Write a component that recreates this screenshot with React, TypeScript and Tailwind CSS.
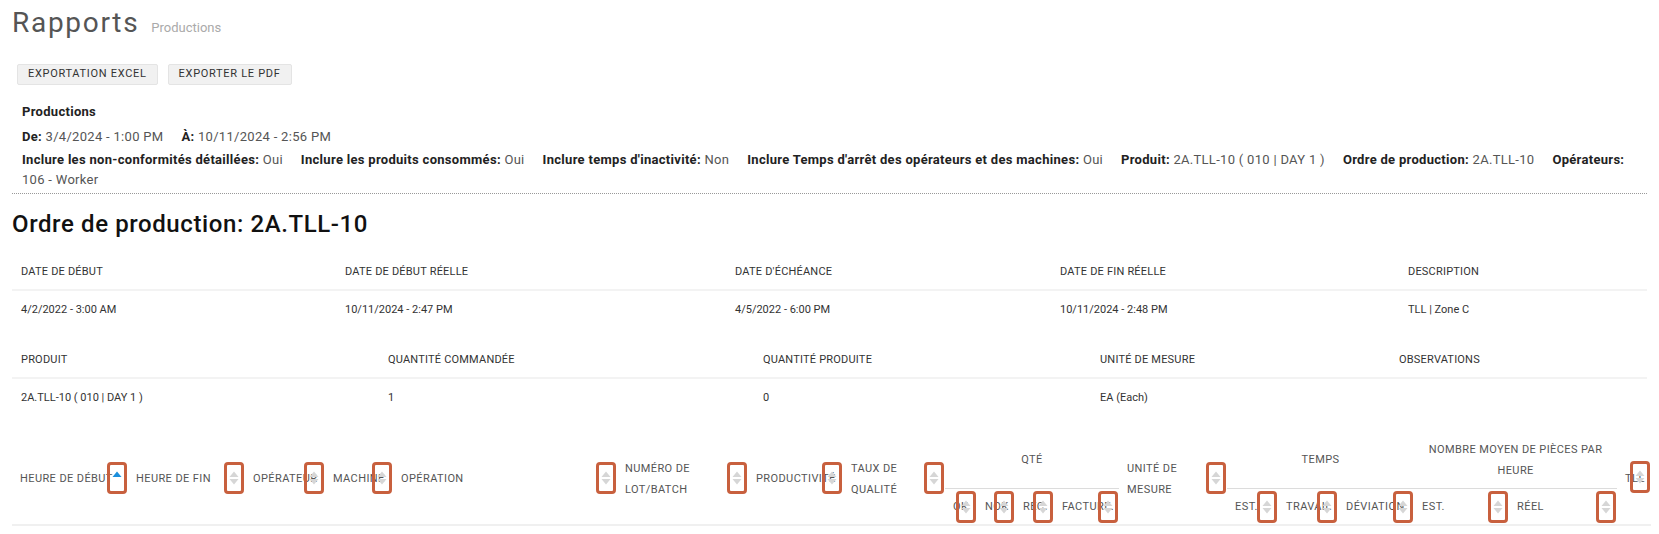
import React from 'react';

type Pos = 'main' | 'sub' | 'tll';

const boxPos: Record<Pos, string> = {
  main: 'top-[24px]',
  sub: 'top-[2px]',
  tll: 'top-[23px]',
};

// sort arrows (datatables style) with the orange highlight frame around them
const SortIcon: React.FC<{ pos: Pos; active?: boolean }> = ({ pos, active }) => (
  <span
    className={`absolute right-[1px] ${boxPos[pos]} w-[20px] h-[32px] rounded-[4px] border-[3px] border-[#c8603e] flex items-center justify-center`}
  >
    <svg width="10" height="14" viewBox="0 0 10 14">
      <polygon points="0.5,6 5,0.5 9.5,6" fill={active ? '#1b8fdc' : '#d6d6d6'} />
      {!active && <polygon points="0.5,8 9.5,8 5,13.5" fill="#d6d6d6" />}
    </svg>
  </span>
);

const filters: [string, string][] = [
  ['Inclure les non-conformités détaillées:', 'Oui'],
  ['Inclure les produits consommés:', 'Oui'],
  ["Inclure temps d'inactivité:", 'Non'],
  ["Inclure Temps d'arrêt des opérateurs et des machines:", 'Oui'],
  ['Produit:', '2A.TLL-10 ( 010 | DAY 1 )'],
  ['Ordre de production:', '2A.TLL-10'],
  ['Opérateurs:', '106 - Worker'],
];

const detailTop = [
  ['Date de début', '4/2/2022 - 3:00 AM'],
  ['Date de début réelle', '10/11/2024 - 2:47 PM'],
  ["Date d'échéance", '4/5/2022 - 6:00 PM'],
  ['Date de fin réelle', '10/11/2024 - 2:48 PM'],
  ['Description', 'TLL | Zone C'],
];

const detailBottom = [
  ['Produit', '2A.TLL-10 ( 010 | DAY 1 )'],
  ['Quantité commandée', '1'],
  ['Quantité produite', '0'],
  ['Unité de mesure', 'EA (Each)'],
  ['Observations', ''],
];

const colWidths = [116, 117, 80, 68, 224, 131, 95, 102, 32, 38, 39, 65, 108, 51, 60, 76, 95, 108, 34];

const thMain = 'relative align-middle text-left font-normal pl-[8px] pr-[18px] pb-[5px] border-b-2 border-[#f0f0f0]';
const thSub = 'relative align-middle text-left font-normal pl-[8px] whitespace-nowrap border-b-2 border-[#f0f0f0]';
const thGroup = 'align-middle text-center font-normal px-[8px] pb-[6px] border-b border-[#dcdcdc]';

export default function App() {
  return (
    <div className="min-h-screen bg-white px-[12px] font-[Roboto,sans-serif] text-[#333]">
      <div className="flex items-baseline gap-[12px] pt-[7px]">
        <h1 className="text-[28px] leading-[32px] tracking-[1.7px] text-[#555] font-normal">Rapports</h1>
        <span className="text-[13px] text-[#aaa]">Productions</span>
      </div>

      <div className="mt-[25px] ml-[5px] flex gap-[10px]">
        <button className="h-[21px] px-[10px] bg-[#f1f1f1] border border-[#e4e4e4] rounded-[2px] text-[11px] tracking-[0.7px] text-[#333]">
          EXPORTATION EXCEL
        </button>
        <button className="h-[21px] px-[10px] bg-[#f1f1f1] border border-[#e4e4e4] rounded-[2px] text-[11px] tracking-[0.7px] text-[#333]">
          EXPORTER LE PDF
        </button>
      </div>

      <div className="mt-[17px] pl-[10px] pr-[8px] pb-[3px] border-b border-dotted border-[#999] text-[13px] tracking-[0.3px] text-[#222]">
        <div className="font-bold leading-[20px]">Productions</div>
        <div className="mt-[5px] leading-[20px]">
          <span className="mr-[18px]">
            <b>De:</b> <span className="text-[#555]">3/4/2024 - 1:00 PM</span>
          </span>
          <span>
            <b>À:</b> <span className="text-[#555]">10/11/2024 - 2:56 PM</span>
          </span>
        </div>
        <div className="mt-[3px] leading-[20px]">
          {filters.map(([label, value]) => (
            <span key={label} className="mr-[18px]">
              <b className="whitespace-nowrap">{label}</b> <span className="text-[#555] whitespace-nowrap">{value}</span>
            </span>
          ))}
        </div>
      </div>

      <h2 className="mt-[16px] text-[24px] leading-[28px] font-medium tracking-[0.6px] text-[#111]">
        Ordre de production: 2A.TLL-10
      </h2>

      <div className="mt-[17px] grid grid-cols-[324px_390px_325px_348px_1fr] text-[11px] text-[#333]">
        {detailTop.map(([h]) => (
          <div key={h} className="h-[36px] flex items-center pl-[9px] uppercase tracking-[0.2px] border-b-2 border-[#f3f3f3]">
            {h}
          </div>
        ))}
        {detailTop.map(([h, v]) => (
          <div key={h + 'v'} className="h-[38px] flex items-center pl-[9px]">
            {v}
          </div>
        ))}
      </div>

      <div className="mt-[14px] grid grid-cols-[367px_375px_337px_299px_1fr] text-[11px] text-[#333]">
        {detailBottom.map(([h]) => (
          <div key={h} className="h-[36px] flex items-center pl-[9px] uppercase tracking-[0.2px] border-b-2 border-[#f3f3f3]">
            {h}
          </div>
        ))}
        {detailBottom.map(([h, v]) => (
          <div key={h + 'v'} className="h-[38px] flex items-center pl-[9px]">
            {v}
          </div>
        ))}
      </div>

      <table className="mt-[21px] table-fixed border-collapse w-[1639px] text-[11px] uppercase tracking-[0.4px] text-[#555] leading-[21px]">
        <colgroup>
          {colWidths.map((w, i) => (
            <col key={i} style={{ width: w }} />
          ))}
        </colgroup>
        <thead>
          <tr className="h-[50px]">
            <th rowSpan={2} className={`${thMain} whitespace-nowrap`}>
              Heure de début
              <SortIcon pos="main" active />
            </th>
            <th rowSpan={2} className={`${thMain} whitespace-nowrap`}>
              Heure de fin
              <SortIcon pos="main" />
            </th>
            <th rowSpan={2} className={`${thMain} whitespace-nowrap`}>
              Opérateur
              <SortIcon pos="main" />
            </th>
            <th rowSpan={2} className={`${thMain} whitespace-nowrap`}>
              Machine
              <SortIcon pos="main" />
            </th>
            <th rowSpan={2} className={`${thMain} whitespace-nowrap`}>
              Opération
              <SortIcon pos="main" />
            </th>
            <th rowSpan={2} className={thMain}>
              Numéro de lot/batch
              <SortIcon pos="main" />
            </th>
            <th rowSpan={2} className={`${thMain} whitespace-nowrap`}>
              Productivité
              <SortIcon pos="main" />
            </th>
            <th rowSpan={2} className={thMain}>
              Taux de qualité
              <SortIcon pos="main" />
            </th>
            <th colSpan={4} className={thGroup}>
              Qté
            </th>
            <th rowSpan={2} className={thMain}>
              Unité de mesure
              <SortIcon pos="main" />
            </th>
            <th colSpan={3} className={thGroup}>
              Temps
            </th>
            <th colSpan={2} className={thGroup}>
              Nombre moyen de pièces par heure
            </th>
            <th rowSpan={2} className={`${thMain} whitespace-nowrap`}>
              TLL
              <SortIcon pos="tll" />
            </th>
          </tr>
          <tr className="h-[37px]">
            {['OK', 'NOK', 'Réc.', 'Facture.', 'Est.', 'Travail', 'Déviation', 'Est.', 'Réel'].map((s, i) => (
              <th key={i} className={thSub}>
                {s}
                <SortIcon pos="sub" />
              </th>
            ))}
          </tr>
        </thead>
      </table>
    </div>
  );
}
